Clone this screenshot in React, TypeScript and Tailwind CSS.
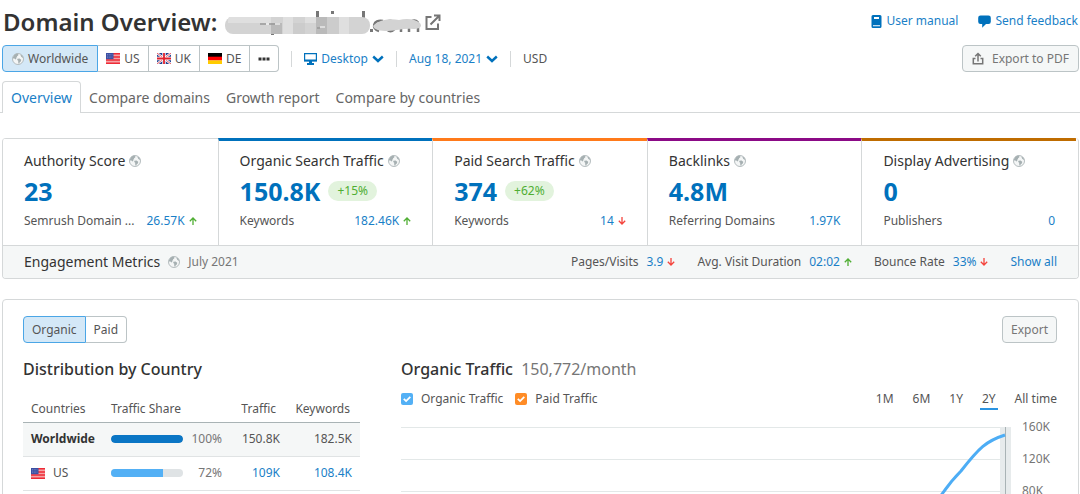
import { useState, type ReactNode } from "react";
import clsx from "clsx";

function GlobeIcon() {
  return (
    <svg viewBox="0 0 12 12" className="size-3 shrink-0" aria-hidden="true">
      <circle cx="6" cy="6" r="5.5" fill="#f4f6f6" stroke="#adb6b8" strokeWidth=".9" />
      <path
        d="M.8 4.4 2.6 1.6 5 .6 6.4 1.2 6.2 2.4 5 3.2 5.2 4.2 4 4.8 4.4 5.8 3.6 6.4 2.4 5.6 1.6 5.8Z M5.4 5.8 7.6 5.6 9.2 6.8 9 8.2 7.6 9.4 7 11.2 6.2 9.4 6.2 7.8 5.2 7Z M8.2 1.4 10.2 2.6 11.4 5 10.2 4.6 9.2 3.8Z"
        fill="#a6b0b2"
      />
    </svg>
  );
}

function ExternalIcon() {
  return (
    <svg viewBox="0 0 16 16" className="size-4" fill="none" stroke="#767676" strokeWidth="2" aria-hidden="true">
      <path d="M6.5 3H1.500v12H13V9.500M5.500 10.500 14 2M9 1.500h5.500V7" />
    </svg>
  );
}

function ChevronIcon() {
  return (
    <svg viewBox="0 0 12 8" className="h-2 w-3" fill="none" stroke="#0071bc" strokeWidth="2.400" aria-hidden="true">
      <path d="M1.200 1.500 6 6l4.800-4.500" />
    </svg>
  );
}

function DesktopIcon() {
  return (
    <svg viewBox="0 0 13 12" className="h-3 w-[13px]" aria-hidden="true">
      <path d="M.6.600h11.800v7H.6z" fill="none" stroke="#0071bc" strokeWidth="1.200" />
      <path d="M0 6.600h13v1.800H0zM5 8h3v2h2v2H3v-2h2z" fill="#0071bc" />
    </svg>
  );
}

function ManualIcon() {
  return (
    <svg viewBox="0 0 11 13" className="h-[13px] w-[11px]" aria-hidden="true">
      <path d="M2 0h7a1.500 1.500 0 0 1 1.500 1.500v10A1.500 1.500 0 0 1 9 13H2A1.500 1.500 0 0 1 .5 11.500v-10A1.500 1.500 0 0 1 2 0Z" fill="#0071bc" />
      <path d="M3 2h5v2H3zM2 10.300h7v1H2z" fill="#fff" />
    </svg>
  );
}

function FeedbackIcon() {
  return (
    <svg viewBox="0 0 13 13" className="size-[13px]" aria-hidden="true">
      <path d="M2.500.500h8A2.300 2.300 0 0 1 12.800 2.800v4a2.300 2.300 0 0 1-2.300 2.300H8L4.200 12.800V9.100H2.500A2.300 2.300 0 0 1 .2 6.800v-4A2.300 2.300 0 0 1 2.500.500Z" fill="#0071bc" />
    </svg>
  );
}

function ExportIcon() {
  return (
    <svg viewBox="0 0 12 13" className="h-[13px] w-3" fill="none" stroke="#767676" strokeWidth="1.500" aria-hidden="true">
      <path d="M3.500 6.500H1.300v5.300h9.400V6.500H8.500M6 9.500V2M3.200 4.300 6 1.500l2.800 2.800" />
    </svg>
  );
}

function Trend({ up }: { up: boolean }) {
  return (
    <svg
      viewBox="0 0 8 8"
      className={clsx("size-2 shrink-0", up ? "text-[#4fae33]" : "rotate-180 text-[#f4433c]")}
      fill="none"
      stroke="currentColor"
      strokeWidth="1.300"
      role="img"
      aria-label={up ? "up" : "down"}
    >
      <path d="M4 8V1.200M.800 4.200 4 1l3.200 3.200" />
    </svg>
  );
}

function Flag({ code }: { code: "US" | "UK" | "DE" }) {
  return (
    <svg viewBox="0 0 14 11" className="h-[11px] w-3.5 shrink-0" aria-hidden="true">
      {code === "US" && (
        <>
          <path d="M0 0h14v11H0z" fill="#f5a3a6" />
          <path d="M0 0h14v1.600H0zM0 3.200h14v1.500H0zM0 6.300h14v1.500H0zM0 9.400h14V11H0z" fill="#ee2b36" />
          <path d="M0 0h7.500v6.200H0z" fill="#3a4fa3" />
          <path d="M1 1.500h5.500M1 3.100h5.500M1 4.700h5.500" stroke="#8e9bd0" strokeWidth=".6" strokeDasharray="1 .7" />
        </>
      )}
      {code === "UK" && (
        <>
          <path d="M0 0h14v11H0z" fill="#22408f" />
          <path d="m0 0 14 11M14 0 0 11" stroke="#fff" strokeWidth="2.200" />
          <path d="m0 0 14 11M14 0 0 11" stroke="#e0303c" strokeWidth=".8" />
          <path d="M7 0v11M0 5.500h14" stroke="#fff" strokeWidth="3.400" />
          <path d="M7 0v11M0 5.500h14" stroke="#e0202c" strokeWidth="1.800" />
        </>
      )}
      {code === "DE" && (
        <>
          <path d="M0 0h14v4H0z" fill="#000" />
          <path d="M0 3.700h14v3.800H0z" fill="#f00" />
          <path d="M0 7.400h14V11H0z" fill="#fc0" />
        </>
      )}
    </svg>
  );
}

function HiddenDomain() {
  return (
    <svg viewBox="0 0 196 26" className="h-[26px] w-[196px]" role="img" aria-label="Hidden domain">
      <path d="M91 2h3v6h-3zM106 2h3v3h-3zM137 2h3v7h-3zM145 20h3v3h-3zM46 23h3v3h-3z" fill="#777" />
      <g fill="none" stroke="#777" strokeWidth="2.500">
        <path d="M158 12c-10-2-12 8-4 10M161 17c-1-7 9-7 9 0s-9 7-9 0M176 23V13M184 23v-8M193 23v-8c0-3-3-4-6-3" />
      </g>
      <rect y="8" width="145" height="17" rx="8" fill="#d3d3d3" />
      <path d="M4 8h30v6H3c0-3 0-5 1-6zM34 8h12v6H34zM58 8h10v17H58zM80 8h11v6H80zM114 8h10v17h-10z" fill="#dfdfdf" />
      <path d="M46 14h11v11H46zM91 8h11v17H91z" fill="#bababa" />
      <path d="M68 14h12v11H68zM102 8h12v17h-12z" fill="#cccccc" />
      <path d="M148 17c5-6 16-8 26-6 8-2 16-1 21 3 3 4-1 6-7 6-10-1-16 2-25 2-8 0-14-1-15-5z" fill="#d3d3d3" />
      <path d="M35 15h6m3 0h6M92 19h3" stroke="#999" strokeWidth="1.500" />
      <path d="M41 15h3m6 0h5M95 18h5" stroke="#fff" strokeWidth="1.200" />
    </svg>
  );
}

interface Metric {
  title: string;
  value: string;
  change?: string;
  label: string;
  amount: string;
  up?: boolean;
  accent: string;
}

const metrics: Metric[] = [
  { title: "Authority Score", value: "23", label: "Semrush Domain ...", amount: "26.57K", up: true, accent: "border-t-[#d5d8d9]" },
  { title: "Organic Search Traffic", value: "150.8K", change: "+15%", label: "Keywords", amount: "182.46K", up: true, accent: "border-t-[#0071bc]" },
  { title: "Paid Search Traffic", value: "374", change: "+62%", label: "Keywords", amount: "14", up: false, accent: "border-t-[#ff7a1a]" },
  { title: "Backlinks", value: "4.8M", label: "Referring Domains", amount: "1.97K", accent: "border-t-[#8b0a86]" },
  { title: "Display Advertising", value: "0", label: "Publishers", amount: "0", accent: "border-t-[#bf6c00]" },
];

const engagement = [
  { label: "Pages/Visits", value: "3.9", up: false },
  { label: "Avg. Visit Duration", value: "02:02", up: true },
  { label: "Bounce Rate", value: "33%", up: false },
];

const tabs = ["Overview", "Compare domains", "Growth report", "Compare by countries"];
const countries = ["US", "UK", "DE"] as const;
const periods = ["1M", "6M", "1Y", "2Y", "All time"];

function MetricCard({ metric, first }: { metric: Metric; first: boolean }) {
  return (
    <article
      className={clsx(
        "min-w-0 px-[21px]",
        metric.accent,
        first ? "border-t pt-3" : "border-t-3 border-l border-l-[#d5d8d9] pt-2.5",
      )}
    >
      <h2 className="flex items-center gap-1 text-sm leading-5 whitespace-nowrap text-[#333]">
        {metric.title}
        <GlobeIcon />
      </h2>
      <div className="mt-1 flex h-8 items-center gap-2">
        <a href="#" className="text-[25px] leading-8 font-bold text-[#0071bc]">{metric.value}</a>
        {metric.change && (
          <span className="rounded-full bg-[#e2f3dd] px-[9px] text-xs leading-5 text-[#4fae33]">{metric.change}</span>
        )}
      </div>
      <div className="mt-1.5 flex items-center justify-between text-xs leading-4 whitespace-nowrap text-[#555]">
        <span>{metric.label}</span>
        <span className="flex items-center gap-1">
          <a href="#" className="text-[#1a7fc7]">{metric.amount}</a>
          {metric.up !== undefined && <Trend up={metric.up} />}
        </span>
      </div>
    </article>
  );
}

function CountryTable() {
  return (
    <table className="mt-[15px] w-full table-fixed text-xs text-[#555]">
      <colgroup>
        <col className="w-20" />
        <col />
        <col className="w-[58px]" />
        <col className="w-20" />
      </colgroup>
      <thead>
        <tr className="h-[26px] border-b border-[#a9b3b5]">
          <th className="pl-2 text-left font-normal">Countries</th>
          <th className="pl-2 text-left font-normal">Traffic Share</th>
          <th className="pr-1 text-right font-normal">Traffic</th>
          <th className="pr-2.5 text-right font-normal">Keywords</th>
        </tr>
      </thead>
      <tbody>
        <CountryRow name={<strong className="text-[#333]">Worldwide</strong>} share={100} traffic="150.8K" keywords="182.5K" />
        <CountryRow
          name={<><Flag code="US" />US</>}
          share={72}
          traffic={<a href="#">109K</a>}
          keywords={<a href="#">108.4K</a>}
          linked
        />
      </tbody>
    </table>
  );
}

function CountryRow(props: { name: ReactNode; share: number; traffic: ReactNode; keywords: ReactNode; linked?: boolean }) {
  const { name, share, traffic, keywords, linked } = props;
  return (
    <tr className={clsx("h-[34px] border-b border-[#e0e3e4]", linked ? "text-[#1a7fc7]" : "bg-[#f5f7f7]")}>
      <th className="pl-2 text-left font-normal text-[#555]">
        <span className="flex items-center gap-2">{name}</span>
      </th>
      <td className="pl-2">
        <span className="flex items-center justify-between text-[#767676]">
          <span className="h-2 w-[72px] overflow-hidden rounded-full bg-[#dfe3e5]">
            <span
              className={clsx("block h-2", linked ? "bg-[#53b0f5]" : "rounded-full bg-[#0b76c5]")}
              style={{ width: `${share}%` }}
            />
          </span>
          {share}%
        </span>
      </td>
      <td className="text-right">{traffic}</td>
      <td className="pr-2 text-right">{keywords}</td>
    </tr>
  );
}

function TrafficChart() {
  return (
    <div className="mt-4 flex gap-[11px]">
      <svg viewBox="0 0 610 100" preserveAspectRatio="xMaxYMin slice" className="h-[68px] min-w-0 flex-1" role="img" aria-label="Organic traffic chart">
        <path d="M0 1.500h610M0 33.500h610M0 65.500h610" stroke="#e3e8e8" />
        <path d="M599 1h11v99h-11z" fill="#e7ebec" />
        <path d="M604.500 1v99" stroke="#a9b3b5" />
        <path d="M539 71C545 62 552 53 560 45 578 22 585 15 604 9" fill="none" stroke="#4dadf5" strokeWidth="3" />
      </svg>
      <div className="flex w-[35px] flex-col text-xs leading-8 text-[#767676]">
        <span className="-mt-[15px]">160K</span>
        <span>120K</span>
        <span>80K</span>
      </div>
    </div>
  );
}

function Series({ label, color }: { label: string; color: string }) {
  return (
    <label className="flex items-center gap-2">
      <span className="grid size-3">
        <input type="checkbox" defaultChecked className={clsx("col-start-1 row-start-1 size-3 appearance-none rounded-xs", color)} />
        <svg viewBox="0 0 12 12" className="pointer-events-none col-start-1 row-start-1 size-3" fill="none" stroke="#fff" strokeWidth="1.800">
          <path d="m2.800 5.800 2.300 2.300 4.200-4.200" />
        </svg>
      </span>
      {label}
    </label>
  );
}

export default function App() {
  const [period, setPeriod] = useState("2Y");

  return (
    <div className="h-screen overflow-hidden bg-white font-['Noto_Sans',sans-serif] text-[#333]">
      <header className="flex items-start justify-between pt-1 pr-0.5 pl-[3px]">
        <div className="flex h-9 items-center gap-1">
          <h1 className="mr-1 text-2xl leading-9 font-semibold">Domain Overview:</h1>
          <HiddenDomain />
          <a href="#" aria-label="Open website"><ExternalIcon /></a>
        </div>
        <div className="mt-2 flex gap-5 text-xs leading-[18px] text-[#1a7fc7]">
          <a href="#" className="flex items-center gap-1"><ManualIcon />User manual</a>
          <a href="#" className="flex items-center gap-1"><FeedbackIcon />Send feedback</a>
        </div>
      </header>

      <div className="mt-[5px] flex items-center justify-between pr-px pl-0.5 text-xs text-[#555]">
        <div className="flex items-center">
          <div className="flex h-[27px]">
            <button className="flex items-center gap-1 rounded-l border border-[#4ba6e6] bg-[#d4e8f7] px-[9px]"><GlobeIcon />Worldwide</button>
            {countries.map((code) => (
              <button key={code} className="flex items-center gap-1 border-y border-r border-[#bcc4c6] px-2">
                <Flag code={code} />
                {code}
              </button>
            ))}
            <button aria-label="More countries" className="rounded-r border-y border-r border-[#bcc4c6] px-2">
              <svg viewBox="0 0 12 4" className="h-1 w-3" fill="#333"><path d="M.500.500h3v3h-3zM4.500.500h3v3h-3zM8.500.500h3v3h-3z" /></svg>
            </button>
          </div>
          <button className="ml-3 flex h-4 items-center gap-1 border-l border-[#d5d8d9] pl-3 text-[#1a7fc7]"><DesktopIcon />Desktop<ChevronIcon /></button>
          <button className="ml-3 flex h-4 items-center gap-1 border-l border-[#d5d8d9] pl-3 text-[#1a7fc7]">Aug 18, 2021<ChevronIcon /></button>
          <span className="ml-3 h-4 border-l border-[#d5d8d9] pl-3 leading-4">USD</span>
        </div>
        <button className="flex h-[27px] items-center gap-2 rounded border border-[#bcc4c6] bg-[#f5f7f7] px-[9px] text-[#767676]"><ExportIcon />Export to PDF</button>
      </div>

      <nav className="mt-[9px] flex h-8 border-b border-[#d5d8d9] pl-0.5 text-sm text-[#666]">
        {tabs.map((tab, i) => (
          <a
            key={tab}
            href="#"
            className={clsx(
              "flex h-8 items-center border border-b-0",
              i === 0 ? "rounded-t border-[#d5d8d9] bg-white px-2 text-[#1a7fc7]" : "border-transparent px-[7px]",
            )}
          >
            {tab}
          </a>
        ))}
      </nav>

      <section className="mt-[25px] mr-px ml-0.5 overflow-hidden rounded-sm border border-t-0 border-[#d5d8d9]">
        <div className="grid h-[107px] grid-cols-5 pr-0.5">
          {metrics.map((metric, i) => <MetricCard key={metric.title} metric={metric} first={i === 0} />)}
        </div>
        <div className="flex h-[33px] items-center justify-between border-t border-[#d5d8d9] bg-[#f5f7f7] px-[21px] text-xs text-[#555]">
          <div className="flex items-center gap-2">
            <h2 className="text-sm text-[#333]">Engagement Metrics</h2>
            <GlobeIcon />
            <span className="text-[#767676]">July 2021</span>
          </div>
          <div className="flex items-center gap-[22px]">
            {engagement.map((item) => (
              <span key={item.label} className="flex items-center gap-1">
                <span className="mr-1">{item.label}</span>
                <a href="#" className="text-[#1a7fc7]">{item.value}</a>
                <Trend up={item.up} />
              </span>
            ))}
            <a href="#" className="text-[#1a7fc7]">Show all</a>
          </div>
        </div>
      </section>

      <section className="mt-5 mr-px ml-0.5 rounded-sm border border-[#d5d8d9] pt-4 pr-[21px] pb-5 pl-5">
        <div className="flex justify-between text-xs text-[#555]">
          <div className="flex h-[27px]">
            <button className="rounded-l border border-[#4ba6e6] bg-[#d4e8f7] px-2">Organic</button>
            <button className="rounded-r border-y border-r border-[#bcc4c6] px-2">Paid</button>
          </div>
          <button className="h-[27px] rounded border border-[#bcc4c6] bg-[#f5f7f7] px-2 text-[#767676]">Export</button>
        </div>
        <div className="mt-3.5 grid grid-cols-[337px_minmax(0,1fr)] gap-[41px]">
          <div>
            <h2 className="text-base leading-6 font-medium">Distribution by Country</h2>
            <CountryTable />
          </div>
          <div>
            <h2 className="text-base leading-6 font-medium">
              Organic Traffic <span className="ml-1 font-normal text-[#767676]">150,772/month</span>
            </h2>
            <div className="mt-[7px] flex items-center justify-between text-xs text-[#555]">
              <div className="flex gap-3">
                <Series label="Organic Traffic" color="bg-[#53b0f5]" />
                <Series label="Paid Traffic" color="bg-[#ff8c26]" />
              </div>
              <div className="flex gap-[15px]">
                {periods.map((item) => (
                  <button
                    key={item}
                    onClick={() => setPeriod(item)}
                    className={clsx(
                      "h-[22px] border-b-2 pt-0.5 last:pr-0",
                      item === period ? "border-[#2b94e1] px-0.5" : "border-transparent px-0.5",
                    )}
                  >
                    {item}
                  </button>
                ))}
              </div>
            </div>
            <TrafficChart />
          </div>
        </div>
      </section>
    </div>
  );
}
